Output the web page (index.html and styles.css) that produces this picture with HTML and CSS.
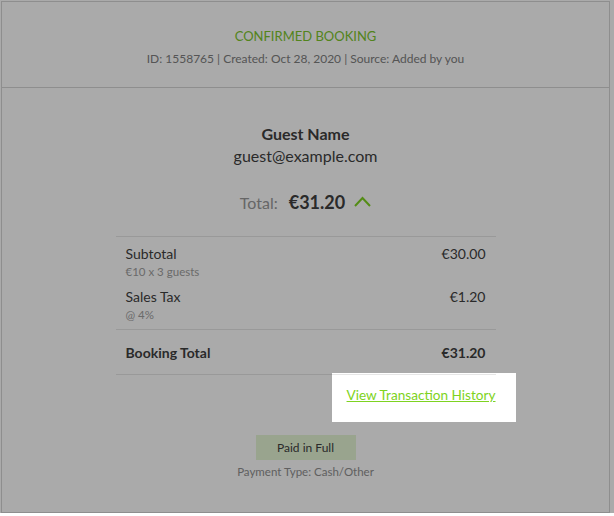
FILE: index.html
```html
<!DOCTYPE html>
<html>
<head>
<meta charset="utf-8">
<link rel="stylesheet" href="styles.css">
</head>
<body>
<div class="card">
  <div class="header">
    <div class="status">CONFIRMED BOOKING</div>
    <div class="meta">ID: 1558765 | Created: Oct 28, 2020 | Source: Added by you</div>
  </div>
  <div class="content">
    <div class="guest-name">Guest Name</div>
    <div class="guest-email">guest@example.com</div>
    <div class="total-row">
      <span class="total-label">Total:</span>
      <span class="total-amount">€31.20</span>
      <svg class="chevron" width="17" height="11" viewBox="0 0 17 11"><path d="M1 10 L8.5 2 L16 10" fill="none" stroke="#7ed321" stroke-width="2"/></svg>
    </div>
    <div class="breakdown">
      <div class="items">
        <div class="item">
          <div class="line"><span>Subtotal</span><span>€30.00</span></div>
          <div class="sub">€10 x 3 guests</div>
        </div>
        <div class="item">
          <div class="line"><span>Sales Tax</span><span>€1.20</span></div>
          <div class="sub">@ 4%</div>
        </div>
      </div>
      <div class="grand"><span>Booking Total</span><span>€31.20</span></div>
      <div class="link-row"><a class="history-link" href="#">View Transaction History</a></div>
    </div>
    <div class="badge">Paid in Full</div>
    <div class="payment-type">Payment Type: Cash/Other</div>
  </div>
</div>
</body>
</html>
```
FILE: styles.css
```css
html, body {
  margin: 0;
  padding: 0;
  background: #ffffff;
}
body {
  font-family: Lato, "Open Sans", sans-serif;
  color: #404040;
}
.card {
  margin: 1px 0 0 1px;
  width: 609px;
  height: 512px;
  box-sizing: border-box;
  border: 1px solid #d6d6d6;
  display: flex;
  flex-direction: column;
}
.header {
  border-bottom: 1px solid #d6d6d6;
  padding: 26px 0 21px;
  text-align: center;
}
.status {
  font-size: 13px;
  line-height: 16px;
  color: #7cc62c;
}
.meta {
  margin-top: 8px;
  font-size: 12px;
  line-height: 14px;
  color: #808080;
}
.content {
  display: flex;
  flex-direction: column;
  align-items: center;
  padding-top: 37px;
}
.guest-name {
  font-size: 16px;
  line-height: 18px;
  font-weight: bold;
}
.guest-email {
  margin-top: 4px;
  font-size: 16px;
  line-height: 18px;
}
.total-row {
  margin-top: 25px;
  height: 24px;
  display: flex;
  align-items: center;
}
.total-label {
  font-size: 16px;
  color: #999999;
}
.total-amount {
  margin-left: 11px;
  font-size: 18px;
  font-weight: bold;
}
.chevron {
  margin-left: 9px;
  margin-top: -2px;
}
.breakdown {
  margin-top: 22px;
  width: 380px;
}
.items {
  border-top: 1px solid #e6e6e6;
  border-bottom: 1px solid #e6e6e6;
  padding: 8px 10px;
  display: flex;
  flex-direction: column;
  gap: 10px;
}
.line, .grand {
  display: flex;
  justify-content: space-between;
  font-size: 14px;
  line-height: 17px;
}
.sub {
  margin-top: 3px;
  font-size: 11.5px;
  line-height: 13px;
  color: #a0a0a0;
}
.grand {
  font-weight: bold;
  padding: 14px 10px 13px;
  border-bottom: 1px solid #e6e6e6;
}
.link-row {
  margin-top: 12px;
  text-align: right;
  font-size: 13.6px;
  line-height: 17px;
}
.history-link {
  position: relative;
  color: #7ed321;
  text-decoration: underline;
}
.history-link::after {
  content: "";
  position: absolute;
  left: -15px;
  right: -20px;
  top: -14px;
  bottom: -19px;
  box-shadow: 0 0 0 3000px rgba(0, 0, 0, 0.333);
  pointer-events: none;
  z-index: 10;
}
.badge {
  margin-top: 31px;
  width: 100px;
  height: 25px;
  line-height: 25px;
  text-align: center;
  font-size: 12px;
  background: #e6f6d6;
  color: #404040;
}
.payment-type {
  margin-top: 5px;
  font-size: 11.5px;
  line-height: 14px;
  color: #909090;
}
```
